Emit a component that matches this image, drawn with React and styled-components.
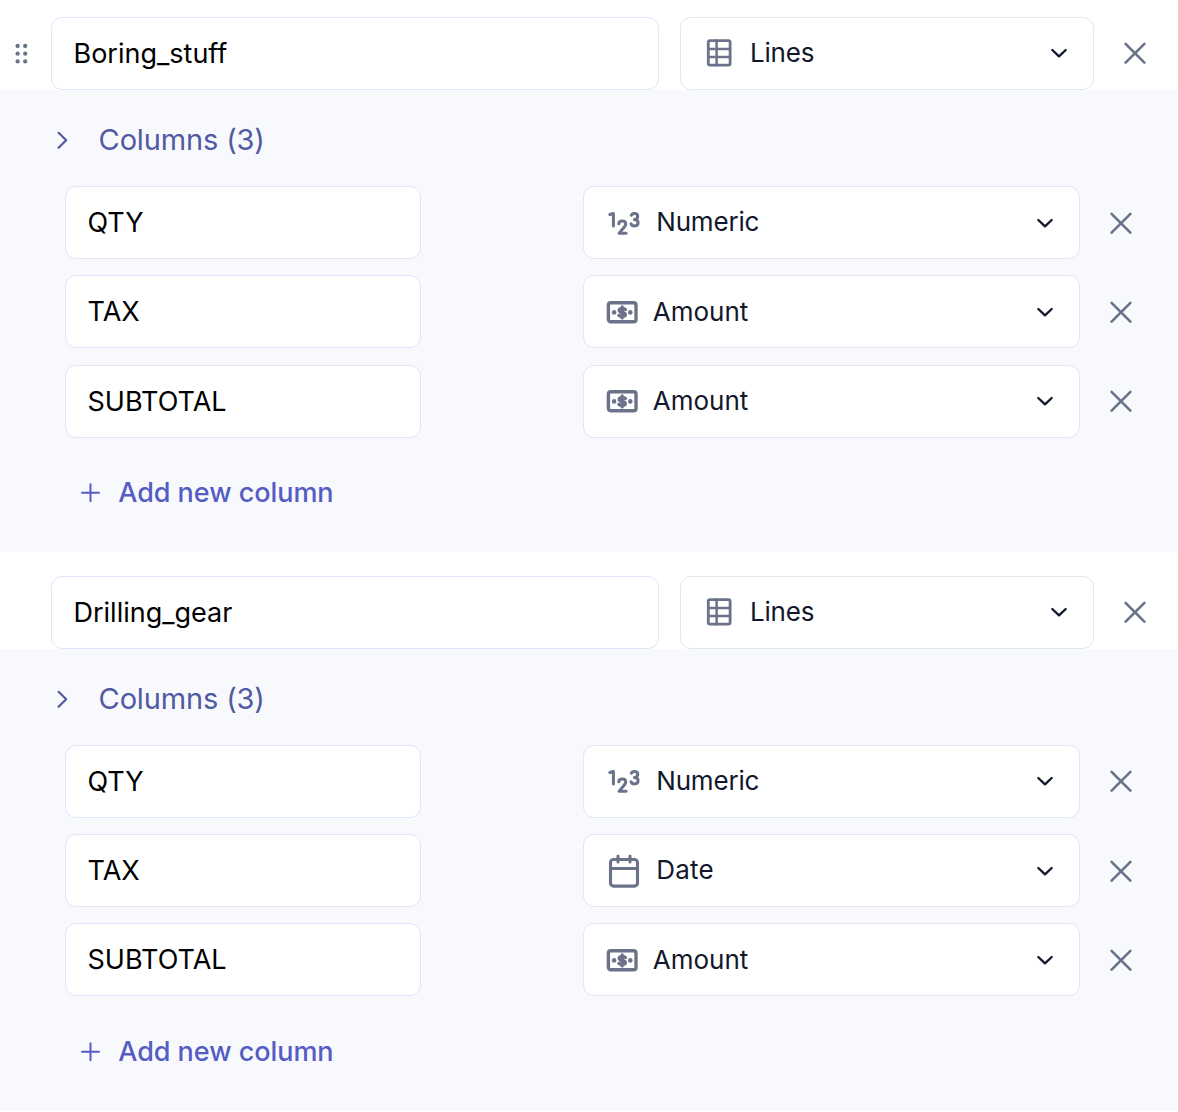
import React from "react";
import styled, { createGlobalStyle } from "styled-components";

const GlobalStyle = createGlobalStyle`
  * { box-sizing: border-box; }
  body {
    margin: 0;
    background: #fff;
    font-family: Inter, "Liberation Sans", sans-serif;
  }
`;

const Page = styled.main`
  display: flex;
  flex-direction: column;
  width: 1178px;
  padding-top: 17px;
  gap: 24px;
`;

const Group = styled.section`
  display: flex;
  flex-direction: column;
  height: 534.85px;
`;

const GroupHeader = styled.header`
  display: grid;
  grid-template-columns: 51px 608px 21px 414px 29px 24px;
  height: 73px;
  align-items: center;
  & > :nth-child(3) { grid-column: 4; }
  & > :nth-child(4) { grid-column: 6; margin-bottom: 1px; }
`;

const HandleSlot = styled.div`
  display: flex;
  padding-left: 14px;
`;

const Field = styled.div`
  display: flex;
  align-items: center;
  height: 73px;
  padding: 1px 21.5px 0;
  border: 1px solid #e2e4fb;
  border-radius: 11px;
  background: #fff;
  color: #000;
  font-size: 27px;
  line-height: 34px;
`;

const SelectBox = styled.div`
  display: flex;
  align-items: center;
  height: 73px;
  padding: 0 24px ${(p) => p.$raise}px ${(p) => p.$inset}px;
  border: 1px solid #e2e6f0;
  border-radius: 11px;
  background: #fff;
  color: #12182b;
`;

const SelectLabel = styled.span`
  flex: 1;
  margin-left: ${(p) => p.$gap}px;
  padding-bottom: ${(p) => p.$lift}px;
  font-size: 26px;
  line-height: 32px;
  letter-spacing: ${(p) => p.$spacing};
`;

const IconButton = styled.button`
  display: flex;
  width: 24px;
  height: 24px;
  padding: 0;
  border: 0;
  background: none;
  color: #68738a;
`;

const Panel = styled.div`
  display: flex;
  flex-direction: column;
  height: 461.85px;
  background: #f8f9fd;
`;

const PanelTitle = styled.div`
  display: flex;
  align-items: center;
  height: 36px;
  margin-top: 32px;
  padding-left: 54px;
  color: #5059a2;
  font-size: 29px;
  line-height: 36px;
`;

const TitleText = styled.span`
  margin-left: 27.6px;
  letter-spacing: -0.15px;
`;

const Rows = styled.div`
  display: flex;
  flex-direction: column;
  gap: 16.3px;
  margin-top: 28px;
  padding-left: 65px;
`;

const Row = styled.div`
  display: grid;
  grid-template-columns: 356px 162px 497px 29px 24px;
  align-items: center;
  & > :nth-child(2) { grid-column: 3; }
  & > :nth-child(3) { grid-column: 5; }
`;

const AddButton = styled.button`
  display: flex;
  align-items: center;
  align-self: flex-start;
  height: 34px;
  margin: 38.3px 0 0 80px;
  padding: 0;
  border: 0;
  background: none;
  color: #555cc4;
  font: 500 27px/34px Inter, "Liberation Sans", sans-serif;
  letter-spacing: -0.05px;
`;

const AddText = styled.span`
  margin-left: 17.3px;
`;

const Svg = styled.svg`
  display: block;
  flex: none;
  fill: none;
  stroke: currentColor;
  stroke-linecap: round;
  stroke-linejoin: round;
`;

const TypeIcon = styled(Svg)`
  color: #6a7389;
`;

const DragIcon = () => (
  <Svg width="16" height="22" viewBox="0 0 16 22" color="#68738a">
    {[3.6, 11.2].map((x) =>
      [3, 10.7, 18.4].map((y) => (
        <circle key={`${x}-${y}`} cx={x} cy={y} r="2.15" fill="currentColor" stroke="none" />
      ))
    )}
  </Svg>
);

const CloseIcon = () => (
  <Svg width="24" height="24" viewBox="0 0 24 24" strokeWidth="2.6">
    <path d="M2.6 2.8 21.4 21.6M21.4 2.8 2.6 21.6" />
  </Svg>
);

const ChevronDown = () => (
  <Svg width="20" height="20" viewBox="0 0 20 20" strokeWidth="2.3">
    <path d="M3.3 7 10 13.4 16.7 7" />
  </Svg>
);

const ChevronRight = () => (
  <Svg width="17" height="20" viewBox="0 0 17 20" strokeWidth="2.2">
    <path d="M4.6 2.8 12.2 10.3 4.6 17.8" />
  </Svg>
);

const PlusIcon = () => (
  <Svg width="21" height="20" viewBox="0 0 21 20" strokeWidth="2">
    <path d="M10.5 1.2v17M2 9.7h17" />
  </Svg>
);

const LinesIcon = () => (
  <TypeIcon width="26" height="30" viewBox="0 0 26 30" strokeWidth="2.8">
    <rect x="2.3" y="2.6" width="21.8" height="24.6" rx="1.6" />
    <path d="M10.6 2.6v24.6M2.3 10.9h21.8M2.3 19h21.8" strokeWidth="2.5" />
  </TypeIcon>
);

const NumericIcon = () => (
  <TypeIcon width="34" height="26" viewBox="0 0 34 26" strokeWidth="3">
    <path d="M2.8 4.5 6.4 3.5V16" />
    <path d="M11.8 13.8C12 10.2 18.7 10 18.7 14 18.7 16.8 15.2 18.8 12.1 23.3H19.1" />
    <path d="M24.3 5.2C25.6 2.7 30.7 3 30.7 6.3 30.7 8.5 29 9.5 27.4 9.5 29.6 9.5 31.1 10.7 31.1 12.7 31.1 16.5 25.3 16.9 24 13.9" />
  </TypeIcon>
);

const AmountIcon = () => (
  <TypeIcon width="32" height="24" viewBox="0 0 32 24" strokeWidth="3.4">
    <rect x="2.4" y="2.8" width="27.6" height="19" rx="2.4" />
    <circle cx="8.1" cy="12.4" r="2.3" fill="currentColor" stroke="none" />
    <circle cx="24.3" cy="12.4" r="2.3" fill="currentColor" stroke="none" />
    <path d="M19.4 9.5C18.2 8.3 13.2 8.1 13.2 10.5 13.2 12.9 19.4 12 19.4 14.6 19.4 16.9 14.2 16.8 12.9 15.3M16.2 7v10.9" strokeWidth="3.3" />
  </TypeIcon>
);

const DateIcon = () => (
  <TypeIcon width="34" height="36" viewBox="0 0 34 36" strokeWidth="3.1">
    <rect x="3.5" y="6.5" width="27" height="26.6" rx="3" />
    <path d="M3.5 15.4h27M11 3.1v5.8M23 3.1v5.8" strokeWidth="3" />
  </TypeIcon>
);

const TYPES = {
  Lines: { Icon: LinesIcon, inset: 25, gap: 18, spacing: "-0.2px", lift: 0, raise: 1 },
  Numeric: { Icon: NumericIcon, inset: 23, gap: 15.3, spacing: "-0.2px", lift: 1, raise: 0 },
  Amount: { Icon: AmountIcon, inset: 22, gap: 14.8, spacing: "0", lift: 0, raise: 0 },
  Date: { Icon: DateIcon, inset: 23, gap: 15.3, spacing: "0.2px", lift: 1, raise: 0 },
};

const TypeSelect = ({ type }) => {
  const { Icon, inset, gap, spacing, lift, raise } = TYPES[type];
  return (
    <SelectBox $inset={inset} $raise={raise}>
      <Icon />
      <SelectLabel $gap={gap} $spacing={spacing} $lift={lift}>{type}</SelectLabel>
      <ChevronDown />
    </SelectBox>
  );
};

const RemoveButton = () => (
  <IconButton aria-label="Remove">
    <CloseIcon />
  </IconButton>
);

const GROUPS = [
  {
    name: "Boring_stuff",
    draggable: true,
    columns: [["QTY", "Numeric"], ["TAX", "Amount"], ["SUBTOTAL", "Amount"]],
  },
  {
    name: "Drilling_gear",
    draggable: false,
    columns: [["QTY", "Numeric"], ["TAX", "Date"], ["SUBTOTAL", "Amount"]],
  },
];

export default function App() {
  return (
    <>
      <GlobalStyle />
      <Page>
        {GROUPS.map((group) => (
          <Group key={group.name}>
            <GroupHeader>
              <HandleSlot>{group.draggable && <DragIcon />}</HandleSlot>
              <Field>{group.name}</Field>
              <TypeSelect type="Lines" />
              <RemoveButton />
            </GroupHeader>
            <Panel>
              <PanelTitle>
                <ChevronRight />
                <TitleText>Columns ({group.columns.length})</TitleText>
              </PanelTitle>
              <Rows>
                {group.columns.map(([name, type]) => (
                  <Row key={name}>
                    <Field>{name}</Field>
                    <TypeSelect type={type} />
                    <RemoveButton />
                  </Row>
                ))}
              </Rows>
              <AddButton>
                <PlusIcon />
                <AddText>Add new column</AddText>
              </AddButton>
            </Panel>
          </Group>
        ))}
      </Page>
    </>
  );
}
